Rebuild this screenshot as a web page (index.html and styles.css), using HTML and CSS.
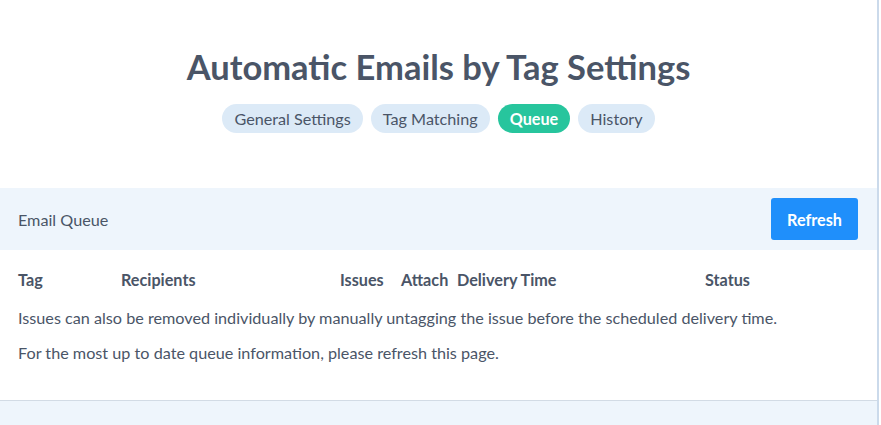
FILE: index.html
```html
<!DOCTYPE html>
<html lang="en">

<head>
    <meta charset="UTF-8" />
    <meta name="viewport" content="width=device-width, initial-scale=1" />
    <title>Automatic Emails by Tag Settings</title>
    <link rel="stylesheet" href="styles.css">
</head>

<body>
    <div class="page">
        <div class="page-header">
            <h1>Automatic Emails by Tag Settings</h1>
            <div class="tabs">
                <a href="#" class="tab">General Settings</a>
                <a href="#" class="tab">Tag Matching</a>
                <a href="#" class="tab active">Queue</a>
                <a href="#" class="tab">History</a>
            </div>
        </div>

        <div class="panel">
            <div class="panel-head">
                <span class="panel-title">Email Queue</span>
                <button class="btn-refresh">Refresh</button>
            </div>
            <div class="panel-body">
                <div class="queue-row queue-head">
                    <span>Tag</span>
                    <span>Recipients</span>
                    <span>Issues</span>
                    <span>Attach</span>
                    <span>Delivery Time</span>
                    <span>Status</span>
                </div>
                <p class="note">Issues can also be removed individually by manually untagging the issue before the scheduled delivery time.</p>
                <p class="note second">For the most up to date queue information, please refresh this page.</p>
            </div>
        </div>

        <div class="page-footer"></div>
    </div>
</body>

</html>
```

FILE: styles.css
```css
:root {
    --text: #4a5567;
    --pill: #dceaf7;
    --green: #27c59d;
    --blue: #1f8ffb;
    --panel-bg: #eef5fc;
    --line: #cbdaeb;
}

body {
    margin: 0;
    font-family: 'Lato', sans-serif;
    background-color: #fff;
    color: var(--text);
}

.page {
    width: 877px;
    height: 425px;
    border-right: 2px solid var(--line);
    overflow: hidden;
}

.page-header {
    padding-top: 47px;
    text-align: center;
}

h1 {
    margin: 0;
    font-size: 34.5px;
    line-height: 40px;
    font-weight: 700;
    color: var(--text);
}

.tabs {
    display: flex;
    justify-content: center;
    gap: 8px;
    margin-top: 17px;
}

.tab {
    display: inline-block;
    padding: 0 12px;
    height: 29px;
    line-height: 29px;
    border-radius: 15px;
    background-color: var(--pill);
    color: var(--text);
    font-size: 16.2px;
    text-decoration: none;
}

.tab.active {
    background-color: var(--green);
    color: #fff;
    font-weight: 700;
}

.panel {
    margin-top: 55px;
}

.panel-head {
    display: flex;
    align-items: center;
    justify-content: space-between;
    height: 62px;
    padding: 0 19px 0 18px;
    background-color: var(--panel-bg);
}

.panel-title {
    font-size: 16.2px;
}

.btn-refresh {
    height: 42px;
    padding: 0 16px;
    border: none;
    border-radius: 3px;
    background-color: var(--blue);
    color: #fff;
    font-family: 'Lato', sans-serif;
    font-size: 16.2px;
    font-weight: 700;
    cursor: pointer;
}

.panel-body {
    padding: 20px 18px 37px;
}

.queue-row {
    display: grid;
    grid-template-columns: 103px 219px 61px 56px 248px 1fr;
    line-height: 20px;
    font-size: 16.2px;
}

.queue-head {
    font-weight: 700;
}

.note {
    margin: 18px 0 0;
    font-size: 16.2px;
    line-height: 20px;
}

.note.second {
    margin-top: 15px;
}

.page-footer {
    height: 30px;
    border-top: 1px solid #d2dbe5;
    background-color: var(--panel-bg);
}
```
